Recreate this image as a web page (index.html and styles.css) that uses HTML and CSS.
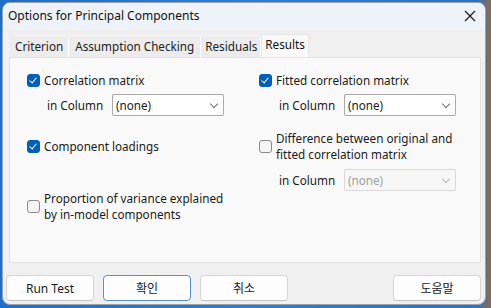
FILE: index.html
```html
<!DOCTYPE html>
<html lang="ko">
<head>
    <meta charset="UTF-8">
    <title>Options for Principal Components</title>
    <link rel="stylesheet" href="styles.css">
</head>
<body>
    <div class="window">
        <div class="titlebar">
            <span class="title">Options for Principal Components</span>
            <svg class="close" width="12" height="12" viewBox="0 0 12 12">
                <path d="M1 1 L11 11 M11 1 L1 11" stroke="#1a1a1a" stroke-width="1.2" fill="none"/>
            </svg>
        </div>

        <div class="content">
            <div class="tabs">
                <div class="tab">Criterion</div>
                <div class="tab">Assumption Checking</div>
                <div class="tab">Residuals</div>
                <div class="tab active">Results</div>
            </div>

            <div class="panel">
                <div class="col">
                    <label class="check">
                        <span class="box checked"></span>
                        <span>Correlation matrix</span>
                    </label>
                    <div class="field">
                        <span class="field-label">in Column</span>
                        <div class="select">(none)<span class="chev"></span></div>
                    </div>
                    <label class="check loadings">
                        <span class="box checked"></span>
                        <span>Component loadings</span>
                    </label>
                    <label class="check multi proportion">
                        <span class="box"></span>
                        <span>Proportion of variance explained<br>by in-model components</span>
                    </label>
                </div>
                <div class="col">
                    <label class="check">
                        <span class="box checked"></span>
                        <span>Fitted correlation matrix</span>
                    </label>
                    <div class="field">
                        <span class="field-label">in Column</span>
                        <div class="select">(none)<span class="chev"></span></div>
                    </div>
                    <label class="check multi difference">
                        <span class="box"></span>
                        <span>Difference between original and<br>fitted correlation matrix</span>
                    </label>
                    <div class="field disabled-field">
                        <span class="field-label">in Column</span>
                        <div class="select disabled">(none)<span class="chev"></span></div>
                    </div>
                </div>
            </div>

            <div class="buttons">
                <button class="btn">Run Test</button>
                <button class="btn default">확인</button>
                <button class="btn">취소</button>
                <span class="spacer"></span>
                <button class="btn">도움말</button>
            </div>
        </div>
    </div>
</body>
</html>
```

FILE: styles.css
```css
body {
    margin: 0;
    width: 491px;
    height: 308px;
    overflow: hidden;
    background: linear-gradient(to right, #1f6fc4 0%, #2a7fd2 50%, #2b74c2 97%, #8c6a52 100%);
    font-family: "Noto Sans", "Noto Sans CJK KR", sans-serif;
    font-size: 11.7px;
    color: #1b1b1b;
}
.window {
    margin: 2px 0 0 2px;
    width: 484px;
    height: 303px;
    border: 1px solid #9aa3ad;
    border-radius: 8px;
    background: #f0f0f0;
    overflow: hidden;
    box-sizing: border-box;
    display: flex;
    flex-direction: column;
}
.titlebar {
    height: 26px;
    background: #eef3fa;
    display: flex;
    align-items: center;
    justify-content: space-between;
    padding: 0 9px 0 5px;
    flex-shrink: 0;
}
.title {
    font-size: 12px;
    color: #111;
    margin-top: -2px;
}
.close {
    margin-top: -1px;
}
.content {
    flex: 1;
    padding: 6px 4px 0 4px;
    display: flex;
    flex-direction: column;
}
.tabs {
    display: flex;
    align-items: flex-end;
    height: 22px;
    padding-left: 3px;
}
.tab {
    height: 20px;
    line-height: 19px;
    padding: 0 5px;
    background: #ececec;
    border-right: 1px solid #ffffff;
    color: #222;
}
.tab:nth-child(2) {
    padding: 0 6px;
}
.tab:nth-child(3) {
    padding: 0 3px 0 4px;
}
.tab.active {
    height: 22px;
    line-height: 19px;
    background: #f9f9f9;
    padding: 0 3px;
    border: 1px solid #e6e6e6;
    border-bottom: none;
    color: #111;
}
.panel {
    height: 206px;
    background: #f9f9f9;
    border: 1px solid #e3e3e3;
    margin-left: 2px;
    box-sizing: border-box;
    display: grid;
    grid-template-columns: 232px 1fr;
    padding: 14px 0 0 17px;
}
.col {
    display: flex;
    flex-direction: column;
}
.check {
    display: flex;
    align-items: center;
    gap: 4px;
    height: 16px;
}
.check.multi {
    height: 32px;
    line-height: 16px;
}
.loadings {
    margin-top: 22px;
}
.proportion {
    margin-top: 36px;
}
.difference {
    margin-top: 14px;
}
.box {
    width: 11px;
    height: 11px;
    border: 1px solid #8a8a8a;
    border-radius: 3px;
    background: #f4f4f4;
    flex-shrink: 0;
    position: relative;
}
.box.checked {
    background: #005fb8;
    border-color: #005fb8;
}
.box.checked::after {
    content: "";
    position: absolute;
    left: 3px;
    top: 1px;
    width: 3px;
    height: 6px;
    border: solid #fff;
    border-width: 0 1.2px 1.2px 0;
    transform: rotate(40deg);
}
.field {
    display: flex;
    align-items: center;
    margin: 6px 0 0 20px;
    height: 22px;
}
.field-label {
    width: 65px;
}
.disabled-field {
    margin-top: 7px;
}
.select {
    width: 112px;
    height: 22px;
    box-sizing: border-box;
    border: 1px solid #a9a9a9;
    background: #ffffff;
    display: flex;
    align-items: center;
    justify-content: space-between;
    padding: 0 6px 0 3px;
    border-radius: 2px;
}
.select.disabled {
    border-color: #d9d9d9;
    background: #f7f7f7;
    color: #a0a0a0;
}
.chev {
    width: 5px;
    height: 5px;
    border: solid #707070;
    border-width: 0 1px 1px 0;
    transform: rotate(45deg);
    margin-top: -3px;
}
.disabled .chev {
    border-color: #b8b8b8;
}
.buttons {
    display: flex;
    gap: 9px;
    margin-top: 12px;
    margin-left: -1px;
}
.spacer {
    flex: 1;
}
.btn {
    width: 88px;
    height: 26px;
    border: 1px solid #d5d5d5;
    border-bottom-color: #c4c4c4;
    border-radius: 4px;
    background: #fdfdfd;
    font-family: "Noto Sans", "Noto Sans CJK KR", sans-serif;
    font-size: 12px;
    color: #1b1b1b;
    padding: 0;
}
.btn.default {
    border: 1px solid #5a8fd0;
    box-shadow: inset 0 0 0 1px #ffffff;
}
```
